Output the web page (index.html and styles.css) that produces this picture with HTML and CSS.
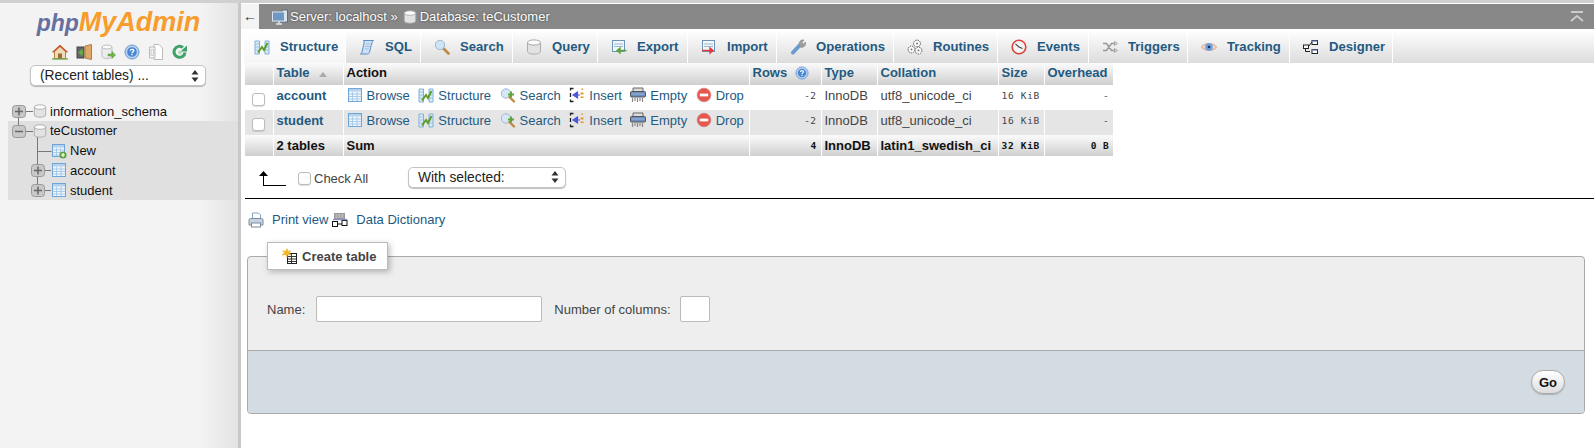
FILE: index.html
```html
<!DOCTYPE html>
<html lang="en">
<head>
<meta charset="UTF-8">
<title>phpMyAdmin - teCustomer</title>
<link rel="stylesheet" href="styles.css">
</head>
<body>
<svg class="defs" width="0" height="0">
  <symbol id="i-browse" viewBox="0 0 16 16">
    <rect x="1.5" y="1.5" width="13" height="13" fill="#eef5fb" stroke="#6ea6d8"/>
    <path d="M2 7h12M2 9.500h12M2 12h12M5.500 5v9M10 5v9" stroke="#a9cbe8"/>
    <rect x="2" y="2" width="12" height="2.500" fill="#b4d2ec"/>
  </symbol>
  <symbol id="i-new" viewBox="0 0 16 16">
    <rect x="1.5" y="1.5" width="12" height="12" fill="#eef5fb" stroke="#6ea6d8"/>
    <path d="M2 7h11M2 9.500h11M2 12h11M5.500 5v8M9.500 5v8" stroke="#a9cbe8"/>
    <rect x="2" y="2" width="11" height="2.500" fill="#b4d2ec"/>
    <circle cx="12" cy="12" r="3.600" fill="#5fa53f"/>
    <path d="M10 12h4M12 10v4" stroke="#fff" stroke-width="1.200"/>
  </symbol>
  <symbol id="i-structure" viewBox="0 0 16 16">
    <path d="M1 2h4.500v13H1zM11 2h4v13h-4z" fill="#dcebf7" stroke="#7fb0da"/>
    <path d="M1 5h4M1 8h4M1 11h4M11 5h4M11 8h4M11 11h4" stroke="#9cc3e4"/>
    <path d="M4 13.500 8 8l2 3 3.500-7" fill="none" stroke="#5d9e2f" stroke-width="2"/>
  </symbol>
  <symbol id="i-sql" viewBox="0 0 16 16">
    <path d="M4.500 1.500h10c-1.500 1-1.500 3-2.300 5l-1.800 7c-.4 1.300-1.400 1.500-2.400 1.500H1.500c1.200-.6 1.400-1.600 1.700-2.800L5 4c.2-1 0-2-.5-2.500z" fill="#cfe2f5" stroke="#5b8fc4"/>
    <path d="M6.500 5h5M6 7.500h5M5.500 10h4" stroke="#9dbfe2"/>
  </symbol>
  <symbol id="i-search" viewBox="0 0 16 16">
    <path d="M9.500 9.500 14.500 14.500" stroke="#c08a3e" stroke-width="2.600" stroke-linecap="round"/>
    <circle cx="6" cy="6" r="4.700" fill="#cfe4f7" stroke="#9fb8cf"/>
  </symbol>
  <symbol id="i-searchplus" viewBox="0 0 16 16">
    <circle cx="6" cy="6.500" r="4.700" fill="#d6e8f7" stroke="#9fb8cf"/>
    <path d="M9.500 10 14 14.500" stroke="#c08a3e" stroke-width="2.400" stroke-linecap="round"/>
    <path d="M11 4.500v6M8 7.500h6" stroke="#5fa53f" stroke-width="2.200"/>
  </symbol>
  <symbol id="i-db" viewBox="0 0 16 16">
    <path d="M1.500 3.500v9c0 1.500 2.900 2.600 6.500 2.600s6.500-1.100 6.500-2.600v-9z" fill="#e2e2e2" stroke="#aaa"/>
    <ellipse cx="8" cy="3.500" rx="6.500" ry="2.600" fill="#fcfcfc" stroke="#aaa"/>
  </symbol>
  <symbol id="i-export" viewBox="0 0 16 16">
    <rect x="1.500" y="1.500" width="12" height="11" fill="#f2f7fc" stroke="#6d94b8"/>
    <path d="M3 5h9M3 7.500h9" stroke="#9bb8d2"/>
    <path d="M15.500 11.500H6M6 11.500l3-2.500v5z" fill="#5fa53f" stroke="#5fa53f" stroke-width="1.400"/>
  </symbol>
  <symbol id="i-import" viewBox="0 0 16 16">
    <rect x="1.500" y="1.500" width="12" height="11" fill="#f2f7fc" stroke="#6d94b8"/>
    <path d="M3 5h9M3 7.500h9" stroke="#9bb8d2"/>
    <path d="M1 11.500h10M12 11.500l-3-2.500v5z" fill="#e03a3a" stroke="#e03a3a" stroke-width="1.400"/>
  </symbol>
  <symbol id="i-wrench" viewBox="0 0 16 16">
    <path d="M3 13.500 9.500 6.500" stroke="#6a9ad0" stroke-width="4" stroke-linecap="round"/>
    <path d="M9 5a4 4 0 0 1 5-4l-2 2.500 1.500 1.500L15.500 3a4 4 0 0 1-5.500 5z" fill="#9c9c9c" stroke="#8a8a8a" stroke-width=".6"/>
  </symbol>
  <symbol id="i-gears" viewBox="0 0 16 16">
    <g fill="#fff" stroke="#555" stroke-width="1" stroke-dasharray="1.500 .8">
      <circle cx="10" cy="4.500" r="3.400"/><circle cx="4.500" cy="10.500" r="3.400"/><circle cx="11.500" cy="11.500" r="3.400"/>
    </g>
    <circle cx="10" cy="4.500" r="1" fill="#777"/><circle cx="4.500" cy="10.500" r="1" fill="#777"/><circle cx="11.500" cy="11.500" r="1" fill="#777"/>
  </symbol>
  <symbol id="i-clock" viewBox="0 0 16 16">
    <circle cx="8" cy="8" r="6.800" fill="#f4f4f4" stroke="#d9453d" stroke-width="1.600"/>
    <path d="M4.500 5 8 8l3.500 1.500" fill="none" stroke="#444" stroke-width="1.100"/>
  </symbol>
  <symbol id="i-triggers" viewBox="0 0 16 16">
    <path d="M1 4.500h3.500l5 7H13M1 11.500h3.500l5-7H13" fill="none" stroke="#999" stroke-width="1.500"/>
    <path d="M12.500 2.500 15.500 4.500l-3 2zM12.500 9.500l3 2-3 2z" fill="#ddd" stroke="#999" stroke-width=".8"/>
  </symbol>
  <symbol id="i-eye" viewBox="0 0 16 16">
    <path d="M.5 8C3 3.500 13 3.500 15.500 8 13 12.500 3 12.500.5 8z" fill="#f4d9c6" stroke="#cf9f80"/>
    <circle cx="8" cy="8" r="3.800" fill="#6c9fe0"/>
    <circle cx="8" cy="8" r="1.300" fill="#1c2f55"/>
  </symbol>
  <symbol id="i-designer" viewBox="0 0 16 16">
    <path d="M5 8H2.500v4.500H7M5 8l4-5" fill="none" stroke="#222"/>
    <rect x="9" y="1.500" width="5.500" height="4" fill="#fff" stroke="#222"/>
    <rect x=".5" y="6" width="5" height="3.500" fill="#fff" stroke="#222"/>
    <rect x="9" y="10.500" width="5.500" height="4" fill="#fff" stroke="#222"/>
    <path d="M9 1.500h5.500v1.200H9zM9 10.500h5.500v1.200H9z" fill="#7c86c0"/>
  </symbol>
  <symbol id="i-insert" viewBox="0 0 16 16">
    <path d="M4.500 1.500H1.500v2M1.500 6v4M1.500 12.500v2h3" fill="none" stroke="#222" stroke-width="1.300"/>
    <path d="M11 8H7M8.500 5 4 8l4.500 3z" fill="#4c57d8" stroke="#4c57d8" stroke-width="1.200"/>
    <path d="M12.500 1.500h1.500v1.500h-1.500zM11.500 5.500h3v2h-3zM11.500 9.500h3v1.500h-3z" fill="#e49a28"/>
  </symbol>
  <symbol id="i-empty" viewBox="0 0 16 16">
    <path d="M3 1h10v3.500H3z" fill="#dcdcdc" stroke="#666"/>
    <rect x=".5" y="4.500" width="15" height="5.500" rx="1" fill="#6c8ebf" stroke="#555"/>
    <path d="M1.500 7h13" stroke="#9ab5da"/>
    <path d="M2.500 11v4M5 11v3M7.500 11v4M10 11v3M12.500 11v4" stroke="#888" stroke-width="1.200"/>
  </symbol>
  <symbol id="i-drop" viewBox="0 0 16 16">
    <circle cx="8" cy="8" r="6.800" fill="#e8574e" stroke="#d08a84"/>
    <rect x="3.800" y="6.600" width="8.400" height="2.800" fill="#fff"/>
  </symbol>
  <symbol id="i-help" viewBox="0 0 16 16">
    <circle cx="8" cy="8" r="7" fill="#b6d2f0" stroke="#6d9bd3"/>
    <circle cx="8" cy="8" r="4.800" fill="#4a87d0"/>
    <path d="M6.200 6.700C6.400 4.800 9.800 4.900 9.800 6.600 9.800 7.900 8 7.800 8 9.200M8 10v1.300" fill="none" stroke="#fff" stroke-width="1.300"/>
  </symbol>
  <symbol id="i-printer" viewBox="0 0 16 16">
    <path d="M4.500 1h6l2 2v4h-8z" fill="#fff" stroke="#8aa3bd"/>
    <path d="M1 7.500C1 7 2 6.500 3 6.500h10c1 0 2 .5 2 1V13H1z" fill="#c4d3e2" stroke="#7e8c9a"/>
    <rect x="3.500" y="11" width="9" height="4" fill="#fff" stroke="#7e8c9a"/>
  </symbol>
  <symbol id="i-dict" viewBox="0 0 16 16">
    <rect x="2" y="1" width="11" height="7" fill="#9a9a9a"/>
    <path d="M3.500 3h8M3.500 5h8" stroke="#ddd" stroke-dasharray="2 1"/>
    <rect x=".5" y="9.500" width="5" height="5" fill="#fff" stroke="#111"/>
    <rect x="10" y="8.500" width="5" height="5" fill="#fff" stroke="#111"/>
    <path d="M5.500 12h4.500" stroke="#111"/>
    <path d="M1 7.500h14" stroke="#8b8fc4" stroke-width="1.400"/>
  </symbol>
  <symbol id="i-create" viewBox="0 0 16 16">
    <rect x="6.500" y="5.500" width="9" height="10" fill="#fff" stroke="#222"/>
    <path d="M7 8.500h8M7 11h8M7 13.500h8M10.500 6v9" stroke="#333"/>
    <path d="M6 .5l1 3 3-1-2 2.300L10.500 7 7 6.500 6 9.500 5 6.500 1 7 3.500 4.800 1.500 2.500l3 1z" fill="#f3b61f" stroke="#e79a10" stroke-width=".4"/>
  </symbol>
  <symbol id="i-home" viewBox="0 0 16 16">
    <path d="M8 1 .5 8h2v6.500h11V8h2z" fill="#eddcb7" stroke="#b5813f"/>
    <path d="M8 1 .5 8h2L8 3l5.500 5h2z" fill="#c8552f"/>
    <rect x="6" y="9.500" width="4" height="5" fill="#9a6a38"/>
    <path d="M0 15h16" stroke="#6da84a" stroke-width="1.400"/>
  </symbol>
  <symbol id="i-exit" viewBox="0 0 16 16">
    <rect x="1" y="3" width="7" height="11" fill="#666" stroke="#444"/>
    <path d="M9 2 15.500.5v15L9 14z" fill="#e2a868" stroke="#b37c3e"/>
    <path d="M7.500 8.500H3M3 8.500l3-2.500v5z" fill="#63ad44" stroke="#63ad44" stroke-width="1.300"/>
  </symbol>
  <symbol id="i-dbgo" viewBox="0 0 16 16">
    <path d="M2 3v9.500c0 1 2.500 2 5 2s5-1 5-2V3z" fill="#ececec" stroke="#bdbdbd"/>
    <ellipse cx="7" cy="3" rx="5" ry="2" fill="#fafafa" stroke="#bdbdbd"/>
    <path d="M8 10h4V7.500l3.500 3.500-3.500 3.500V12H8z" fill="#6fb84c" stroke="#4f8f31" stroke-width=".5"/>
  </symbol>
  <symbol id="i-docs" viewBox="0 0 16 16">
    <path d="M6 .5h5l3.500 3.500v11.500H6z" fill="#fff" stroke="#bbb"/>
    <path d="M1.500 3h5.500v11H1.500z" fill="#f4f4f4" stroke="#bbb"/>
    <path d="M3 5.500h2.500v6H3z" fill="none" stroke="#ccc"/>
  </symbol>
  <symbol id="i-reload" viewBox="0 0 16 16">
    <path d="M13 8.500A5.500 5.500 0 1 1 11 3.500" fill="none" stroke="#3fa068" stroke-width="3"/>
    <path d="M8.500 7.500h6.500v-6z" fill="#3fa068"/>
    <circle cx="8" cy="8.500" r="1.800" fill="#a8d8b8"/>
  </symbol>
  <symbol id="i-server" viewBox="0 0 16 16">
    <rect x="10" y="1" width="5.500" height="12" fill="#dce3ea" stroke="#5f6f80"/>
    <rect x=".5" y="3" width="12" height="9" fill="#6d98c6" stroke="#dde3ea"/>
    <path d="M4 15h6M7 12v3" stroke="#dde3ea" stroke-width="1.400"/>
  </symbol>
</svg>

<div class="page">
  <aside class="sidebar">
    <div class="logo"><span class="logo-php">php</span><span class="logo-my">MyAdmin</span></div>
    <div class="nav-icons">
      <svg class="ic"><use href="#i-home"/></svg>
      <svg class="ic"><use href="#i-exit"/></svg>
      <svg class="ic"><use href="#i-dbgo"/></svg>
      <svg class="ic"><use href="#i-help"/></svg>
      <svg class="ic"><use href="#i-docs"/></svg>
      <svg class="ic"><use href="#i-reload"/></svg>
    </div>
    <select class="mac-select recent"><option>(Recent tables) ...</option></select>

    <div class="tree">
      <div class="tree-row">
        <svg class="conn conn-db"><path d="M18.500 16v8M26 10.500h7"/><rect x="12.500" y="4.500" width="13" height="12" rx="3"/><path class="mark" d="M15 10.500h8M19 6.500v8"/></svg>
        <svg class="ic ic-db"><use href="#i-db"/></svg>
        <span>information_schema</span>
      </div>
      <div class="tree-open">
        <div class="tree-row">
          <svg class="conn conn-db"><path d="M18.500 0v4M26 10.500h7M37.500 16v8"/><rect x="12.500" y="4.500" width="13" height="12" rx="3"/><path class="mark" d="M15 10.500h8"/></svg>
          <svg class="ic ic-db"><use href="#i-db"/></svg>
          <span>teCustomer</span>
        </div>
        <div class="tree-row">
          <svg class="conn conn-tb"><path d="M37.500 0v20M37.500 10.500h14"/></svg>
          <svg class="ic"><use href="#i-new"/></svg>
          <span>New</span>
        </div>
        <div class="tree-row">
          <svg class="conn conn-tb"><path d="M37.500 0v4M37.500 16v4M45 10.500h6"/><rect x="31.500" y="4.500" width="13" height="12" rx="3"/><path class="mark" d="M34 10.500h8M38 6.500v8"/></svg>
          <svg class="ic"><use href="#i-browse"/></svg>
          <span>account</span>
        </div>
        <div class="tree-row">
          <svg class="conn conn-tb"><path d="M37.500 0v4M45 10.500h6"/><rect x="31.500" y="4.500" width="13" height="12" rx="3"/><path class="mark" d="M34 10.500h8M38 6.500v8"/></svg>
          <svg class="ic"><use href="#i-browse"/></svg>
          <span>student</span>
        </div>
      </div>
    </div>
  </aside>

  <main class="main">
    <header class="topbar">
      <div class="back">&#8592;</div>
      <svg class="ic crumb-ic"><use href="#i-server"/></svg>
      <span class="crumb">Server: localhost »</span>
      <svg class="ic ic-small"><use href="#i-db"/></svg>
      <span class="crumb">Database: teCustomer</span>
      <svg class="collapse" viewBox="0 0 14 12"><path d="M1 1h12" stroke-width="2"/><path d="M1 10l6-5 6 5" stroke-width="2"/></svg>
    </header>

    <nav class="tabs">
      <a class="tab active"><svg class="ic"><use href="#i-structure"/></svg>Structure</a>
      <a class="tab"><svg class="ic"><use href="#i-sql"/></svg>SQL</a>
      <a class="tab"><svg class="ic"><use href="#i-search"/></svg>Search</a>
      <a class="tab"><svg class="ic"><use href="#i-db"/></svg>Query</a>
      <a class="tab"><svg class="ic"><use href="#i-export"/></svg>Export</a>
      <a class="tab"><svg class="ic"><use href="#i-import"/></svg>Import</a>
      <a class="tab"><svg class="ic"><use href="#i-wrench"/></svg>Operations</a>
      <a class="tab"><svg class="ic"><use href="#i-gears"/></svg>Routines</a>
      <a class="tab"><svg class="ic"><use href="#i-clock"/></svg>Events</a>
      <a class="tab"><svg class="ic"><use href="#i-triggers"/></svg>Triggers</a>
      <a class="tab"><svg class="ic"><use href="#i-eye"/></svg>Tracking</a>
      <a class="tab"><svg class="ic"><use href="#i-designer"/></svg>Designer</a>
      <span class="tab-rest"></span>
    </nav>

    <table class="tables">
      <colgroup>
        <col class="c-check"><col class="c-table"><col class="c-action"><col class="c-rows"><col class="c-type"><col class="c-coll"><col class="c-size"><col class="c-over">
      </colgroup>
      <thead>
        <tr>
          <th></th>
          <th><a>Table</a><span class="sort"></span></th>
          <th class="plain">Action</th>
          <th><a>Rows</a><svg class="ic help"><use href="#i-help"/></svg></th>
          <th><a>Type</a></th>
          <th><a>Collation</a></th>
          <th><a>Size</a></th>
          <th><a>Overhead</a></th>
        </tr>
      </thead>
      <tbody>
        <tr>
          <td class="chk"><input type="checkbox"></td>
          <td class="name"><a>account</a></td>
          <td>
            <div class="actions">
              <a class="act"><svg class="ic"><use href="#i-browse"/></svg>Browse</a>
              <a class="act"><svg class="ic"><use href="#i-structure"/></svg>Structure</a>
              <a class="act"><svg class="ic"><use href="#i-searchplus"/></svg>Search</a>
              <a class="act"><svg class="ic"><use href="#i-insert"/></svg>Insert</a>
              <a class="act"><svg class="ic"><use href="#i-empty"/></svg>Empty</a>
              <a class="act"><svg class="ic"><use href="#i-drop"/></svg>Drop</a>
            </div>
          </td>
          <td class="num">-2</td>
          <td>InnoDB</td>
          <td>utf8_unicode_ci</td>
          <td class="mono">16 KiB</td>
          <td class="num">-</td>
        </tr>
        <tr class="even">
          <td class="chk"><input type="checkbox"></td>
          <td class="name"><a>student</a></td>
          <td>
            <div class="actions">
              <a class="act"><svg class="ic"><use href="#i-browse"/></svg>Browse</a>
              <a class="act"><svg class="ic"><use href="#i-structure"/></svg>Structure</a>
              <a class="act"><svg class="ic"><use href="#i-searchplus"/></svg>Search</a>
              <a class="act"><svg class="ic"><use href="#i-insert"/></svg>Insert</a>
              <a class="act"><svg class="ic"><use href="#i-empty"/></svg>Empty</a>
              <a class="act"><svg class="ic"><use href="#i-drop"/></svg>Drop</a>
            </div>
          </td>
          <td class="num">-2</td>
          <td>InnoDB</td>
          <td>utf8_unicode_ci</td>
          <td class="mono">16 KiB</td>
          <td class="num">-</td>
        </tr>
      </tbody>
      <tfoot>
        <tr>
          <th></th>
          <th>2 tables</th>
          <th class="plain">Sum</th>
          <th class="num">4</th>
          <th>InnoDB</th>
          <th>latin1_swedish_ci</th>
          <th class="mono">32 KiB</th>
          <th class="num">0 B</th>
        </tr>
      </tfoot>
    </table>

    <div class="with-selected">
      <svg class="arrow-up" viewBox="0 0 28 16"><path d="M5.500 15V3M5.500 14.500H28"/><path class="tip" d="M5.500 0 10 5H1z"/></svg>
      <label class="check-all"><input type="checkbox">Check All</label>
      <select class="mac-select selected"><option>With selected:</option></select>
    </div>
    <hr class="rule">

    <div class="links">
      <svg class="ic"><use href="#i-printer"/></svg><a class="link-print">Print view</a>
      <svg class="ic"><use href="#i-dict"/></svg><a>Data Dictionary</a>
    </div>

    <form class="create">
      <fieldset class="create-set">
        <legend class="create-legend"><svg class="ic"><use href="#i-create"/></svg>Create table</legend>
        <div class="create-fields">
          <label for="tbl-name">Name:</label>
          <input id="tbl-name" class="field name-field" type="text">
          <label for="tbl-cols" class="cols-label">Number of columns:</label>
          <input id="tbl-cols" class="field cols-field" type="text">
        </div>
        <div class="create-foot"><button type="button" class="go">Go</button></div>
      </fieldset>
    </form>
  </main>
</div>
</body>
</html>
```

FILE: styles.css
```css
* {
    box-sizing: border-box;
}
html, body {
    margin: 0;
    height: 448px;
    overflow: hidden;
    background-color: #fff;
}
body {
    font-family: "Liberation Sans", Arial, sans-serif;
    font-size: 13px;
    color: #444;
    border-top: 3px solid #d0d0d0;
}
a {
    color: #235a81;
}
.defs {
    display: none;
}
.ic {
    width: 16px;
    height: 16px;
    flex: none;
}
.page {
    display: flex;
    height: 445px;
}

/* left navigation */
.sidebar {
    width: 241px;
    flex: none;
    padding-top: 3px;
    background: linear-gradient(to right, #f3f3f3 0, #f3f3f3 200px, #e4e4e4 238px, #c8c8c8 238px);
    color: #111;
}
.logo {
    height: 36px;
    text-align: center;
    font-weight: bold;
    font-style: italic;
    font-family: "Liberation Sans", Arial, sans-serif;
    line-height: 33px;
    padding-right: 4px;
    white-space: nowrap;
}
.logo-php {
    color: #666f9f;
    font-size: 23px;
}
.logo-my {
    color: #f89c2c;
    font-size: 27px;
}
.nav-icons {
    display: flex;
    justify-content: center;
    gap: 8px;
    padding-right: 2px;
    margin-top: 2px;
}
.mac-select {
    appearance: none;
    font: 13.8px "Liberation Sans", Arial, sans-serif;
    color: #222;
    border: 1px solid #c4c4c4;
    border-radius: 5px;
    background: #fff url("data:image/svg+xml,%3Csvg xmlns='http://www.w3.org/2000/svg' width='8' height='12'%3E%3Cpath d='M4 0 7.500 4.500H.5zM4 12 .5 7.500h7z' fill='%23333'/%3E%3C/svg%3E") no-repeat right 6px center;
    box-shadow: 0 1px 1px rgba(0, 0, 0, .25);
    height: 21px;
    padding: 0 0 0 9px;
}
.recent {
    display: block;
    width: 176px;
    margin: 5px 0 0 30px;
}
.tree {
    margin-top: 15px;
    font-size: 13px;
}
.tree-row {
    display: flex;
    align-items: center;
    height: 20px;
}
.tree-open {
    margin-left: 8px;
    background-color: #e0e0e0;
    height: 79px;
    width: 230px;
}
.tree-open .conn {
    margin-left: -8px;
}
.tree-open .tree-row {
    height: 19.75px;
}
.conn {
    height: 20px;
    flex: none;
    overflow: visible;
    fill: none;
    stroke: #777;
}
.conn rect {
    fill: #c8c8c8;
    stroke: #999;
}
.conn .mark {
    stroke: #666;
    stroke-width: 1.500;
}
.conn-db {
    width: 33px;
}
.conn-tb {
    width: 51px;
}
.ic-db {
    width: 14px;
    height: 14px;
    margin-right: 3px;
}
.tree-row .ic + span {
    margin-left: 3px;
}
.tree-row .ic-db + span {
    margin-left: 0;
}

/* main column */
.main {
    flex: 1;
    min-width: 0;
}
.topbar {
    display: flex;
    align-items: center;
    height: 25px;
    background-color: #888;
    margin-top: 1px;
}
.back {
    width: 18px;
    height: 25px;
    background-color: #f4f4f4;
    color: #333;
    font-size: 14px;
    line-height: 24px;
    text-align: center;
    margin-right: 13px;
}
.crumb-ic {
    margin-right: 2px;
}
.crumb {
    color: #fff;
    font-size: 13px;
    text-shadow: 0 0 2px #333;
}
.ic-small {
    width: 14px;
    height: 14px;
    margin: 0 3px 0 5px;
}
.collapse {
    width: 14px;
    height: 12px;
    margin-left: auto;
    margin-right: 10px;
    fill: none;
    stroke: #ccc;
}
.tabs {
    display: grid;
    grid-template-columns: 102px 75px 92px 85px 90px 89px 117px 104px 91px 99px 102px 103px 1fr;
    height: 33px;
    margin: 1px 0 0 3px;
}
.tab {
    display: flex;
    align-items: center;
    gap: 10px;
    padding-left: 13px;
    font-weight: bold;
    font-size: 13.1px;
    border-right: 1px solid #fff;
    background: linear-gradient(#fff, #dcdcdc);
    white-space: nowrap;
    overflow: hidden;
}
.tab.active {
    padding-left: 10px;
    background: linear-gradient(#fff, #f6f6f6);
}
.tab-rest {
    background: linear-gradient(#fff, #dcdcdc);
}

/* table list */
.tables {
    table-layout: fixed;
    border-collapse: collapse;
    width: 868px;
    margin-left: 4px;
}
.c-check { width: 28px; }
.c-table { width: 70px; }
.c-action { width: 406px; }
.c-rows { width: 72px; }
.c-type { width: 56px; }
.c-coll { width: 121px; }
.c-size { width: 46px; }
.c-over { width: 69px; }
.tables th, .tables td {
    padding: 0 4px 3px 3px;
    text-align: left;
    white-space: nowrap;
    overflow: hidden;
    font-size: 13px;
}
.tables td {
    padding-bottom: 5px;
}
.tables thead tr {
    height: 22px;
}
.tables tbody tr {
    height: 25px;
}
.tables tfoot tr {
    height: 21px;
}
.tables tfoot th {
    padding-bottom: 0;
}
.tables th {
    background: linear-gradient(#fbfbfb, #cfcfcf);
    border-left: 1px solid #fff;
    color: #111;
    font-weight: bold;
}
.tables th:first-child {
    border-left: none;
}
.tables td {
    color: #444;
}
.tables .even td {
    background-color: #e5e5e5;
}
.tables td + td {
    border-left: 1px solid transparent;
}
.tables .name {
    font-weight: bold;
}
.sort {
    display: inline-block;
    margin-left: 9px;
    border: 4px solid transparent;
    border-bottom: 5px solid #aaa;
    border-top: none;
}
.help {
    width: 14px;
    height: 14px;
    margin-left: 8px;
    vertical-align: -3px;
}
.tables .chk {
    padding: 1px 0 0 7px;
}
.chk input, .check-all input {
    appearance: none;
    width: 13px;
    height: 13px;
    margin: 0;
    background-color: #fff;
    border: 1px solid #bbb;
    border-radius: 3px;
    box-shadow: 0 1px 1px rgba(0, 0, 0, .12);
    vertical-align: -3px;
}
.actions {
    display: flex;
    gap: 8.5px;
}
.act {
    display: flex;
    align-items: center;
    gap: 4px;
}
.tables .num {
    text-align: right;
    font-family: "DejaVu Sans Mono", monospace;
    font-size: 9.5px;
    letter-spacing: .4px;
}
.tables .mono {
    font-family: "DejaVu Sans Mono", monospace;
    font-size: 9.5px;
    letter-spacing: .7px;
}

/* bulk action row */
.with-selected {
    display: flex;
    align-items: center;
    height: 42px;
    padding-left: 17px;
}
.arrow-up {
    width: 28px;
    height: 16px;
    margin-top: 3px;
    fill: none;
    stroke: #000;
}
.arrow-up .tip {
    fill: #000;
    stroke: none;
}
.check-all {
    display: flex;
    align-items: center;
    gap: 3px;
    margin-left: 12px;
    margin-top: 2px;
    width: 110px;
}
.selected {
    width: 158px;
}
.rule {
    height: 1px;
    border: none;
    margin: 0 0 0 4px;
    background-color: #000;
}
.links {
    display: flex;
    align-items: center;
    margin: 10px 0 0 7px;
    height: 21px;
}
.links a {
    margin-left: 8px;
}
.links .link-print {
    margin-right: 4px;
}

/* create table box */
.create {
    margin: 12px 9px 0 6px;
}
.create-set {
    margin: 0;
    padding: 0;
    min-inline-size: 0;
    border: 1px solid #aaa;
    border-radius: 4px;
    background-color: #eee;
}
.create-legend {
    display: flex;
    align-items: center;
    gap: 5px;
    margin-left: 19px;
    padding: 0 8px 0 13px;
    width: 121px;
    height: 28px;
    background-color: #fff;
    border: 1px solid #bbb;
    color: #444;
    font-weight: bold;
    white-space: nowrap;
    box-shadow: 2px 2px 6px rgba(0, 0, 0, .25);
}
.create-fields {
    display: flex;
    align-items: center;
    height: 80px;
    padding: 0 0 2px 19px;
}
.field {
    height: 26px;
    background-color: #fff;
    border: 1px solid #bbb;
    border-radius: 2px;
}
.name-field {
    width: 226px;
    margin-left: 11px;
}
.cols-label {
    margin-left: 12px;
}
.cols-field {
    width: 30px;
    margin-left: 9px;
}
.create-foot {
    display: flex;
    justify-content: flex-end;
    align-items: center;
    height: 63px;
    padding: 0 19px 0 0;
    background-color: #d3dce3;
    border-top: 1px solid #aaa;
    border-radius: 0 0 4px 4px;
}
.go {
    width: 34px;
    height: 24px;
    padding: 0;
    font: bold 13px "Liberation Sans", Arial, sans-serif;
    color: #111;
    border: 1px solid #aaa;
    border-radius: 12px;
    background: linear-gradient(#fff, #ddd);
    box-shadow: 0 1px 1px rgba(0, 0, 0, .2);
}
```
